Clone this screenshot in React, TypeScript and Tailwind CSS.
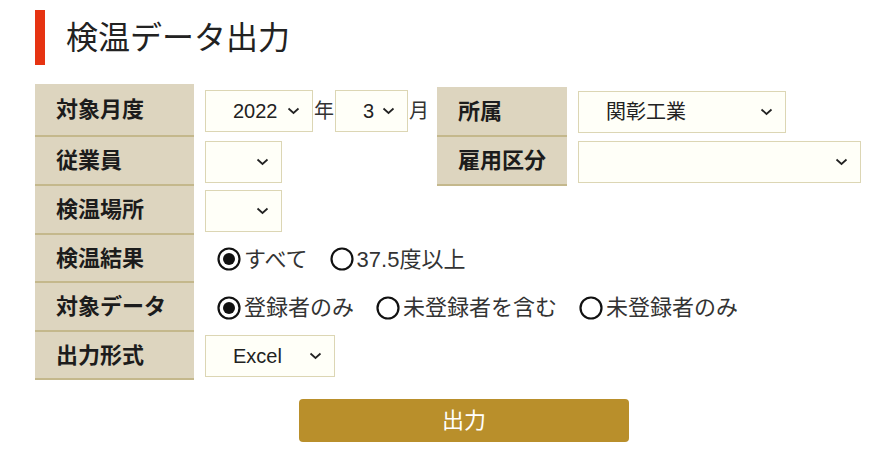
const font = { fontFamily: '"Liberation Sans", "Noto Sans CJK JP", sans-serif' }

function Chevron() {
  return (
    <svg width="13" height="8" viewBox="0 0 13 8" className="shrink-0">
      <path d="M1.5 1.5 L6.5 6 L11.5 1.5" fill="none" stroke="#222" strokeWidth="1.7" />
    </svg>
  )
}

function Select({ value, width }: { value?: string; width: string }) {
  return (
    <div
      className={`flex h-[42px] items-center justify-between border border-[#dcd6b4] bg-[#fffff8] pl-[27px] pr-[12px] text-[20px] text-[#222] ${width}`}
    >
      <span>{value}</span>
      <Chevron />
    </div>
  )
}

function Radio({ label, checked }: { label: string; checked?: boolean }) {
  return (
    <label className="flex items-center gap-[3px] text-[22px] text-[#333]">
      <svg width="24" height="24" viewBox="0 0 24 24" className="shrink-0">
        <circle cx="12" cy="12" r="10.5" fill="#fff" stroke="#111" strokeWidth="2.2" />
        {checked && <circle cx="12" cy="12" r="6" fill="#111" />}
      </svg>
      <span>{label}</span>
    </label>
  )
}

function Label({ text, width = 'w-[159px]' }: { text: string; width?: string }) {
  return (
    <div
      className={`flex h-full items-center border-b-2 border-[#c4b88c] bg-[#ddd5bf] pl-[21px] text-[22px] font-bold text-[#1c1c1c] ${width}`}
    >
      {text}
    </div>
  )
}

export default function App() {
  return (
    <div className="h-[457px] w-[895px] bg-white" style={font}>
      <div className="flex items-center pl-[35px] pt-[10px]">
        <div className="h-[55px] w-[10px] bg-[#e63312]" />
        <h1 className="ml-[21px] text-[32px] font-normal text-[#222]">検温データ出力</h1>
      </div>

      <div className="ml-[35px] mt-[19px] w-[826px]">
        <div className="flex h-[53px] items-stretch">
          <Label text="対象月度" />
          <div className="ml-[11px] flex w-[232px] items-center gap-[1px] text-[20px] text-[#333]">
            <Select value="2022" width="w-[108px]" />
            <span>年</span>
            <Select value="3" width="w-[73px]" />
            <span>月</span>
          </div>
          <div className="pt-[3px]">
            <Label text="所属" width="w-[130px]" />
          </div>
          <div className="ml-[11px] flex items-center pt-[3px]">
            <Select value="関彰工業" width="w-[208px]" />
          </div>
        </div>

        <div className="flex h-[49px] items-stretch">
          <Label text="従業員" />
          <div className="ml-[11px] flex w-[232px] items-center">
            <Select width="w-[77px]" />
          </div>
          <Label text="雇用区分" width="w-[130px]" />
          <div className="ml-[11px] flex items-center">
            <Select width="w-[283px]" />
          </div>
        </div>

        <div className="flex h-[49px] items-stretch">
          <Label text="検温場所" />
          <div className="ml-[11px] flex items-center">
            <Select width="w-[77px]" />
          </div>
        </div>

        <div className="flex h-[48px] items-stretch">
          <Label text="検温結果" />
          <div className="ml-[23px] flex items-center gap-[22px]">
            <Radio label="すべて" checked />
            <Radio label="37.5度以上" />
          </div>
        </div>

        <div className="flex h-[49px] items-stretch">
          <Label text="対象データ" />
          <div className="ml-[23px] flex items-center gap-[22px]">
            <Radio label="登録者のみ" checked />
            <Radio label="未登録者を含む" />
            <Radio label="未登録者のみ" />
          </div>
        </div>

        <div className="flex h-[48px] items-stretch">
          <Label text="出力形式" />
          <div className="ml-[11px] flex items-center">
            <Select value="Excel" width="w-[130px]" />
          </div>
        </div>

        <button className="ml-[264px] mt-[19px] flex h-[43px] w-[330px] items-center justify-center rounded-[4px] bg-[#b98f2b] text-[22px] text-white">
          出力
        </button>
      </div>
    </div>
  )
}
